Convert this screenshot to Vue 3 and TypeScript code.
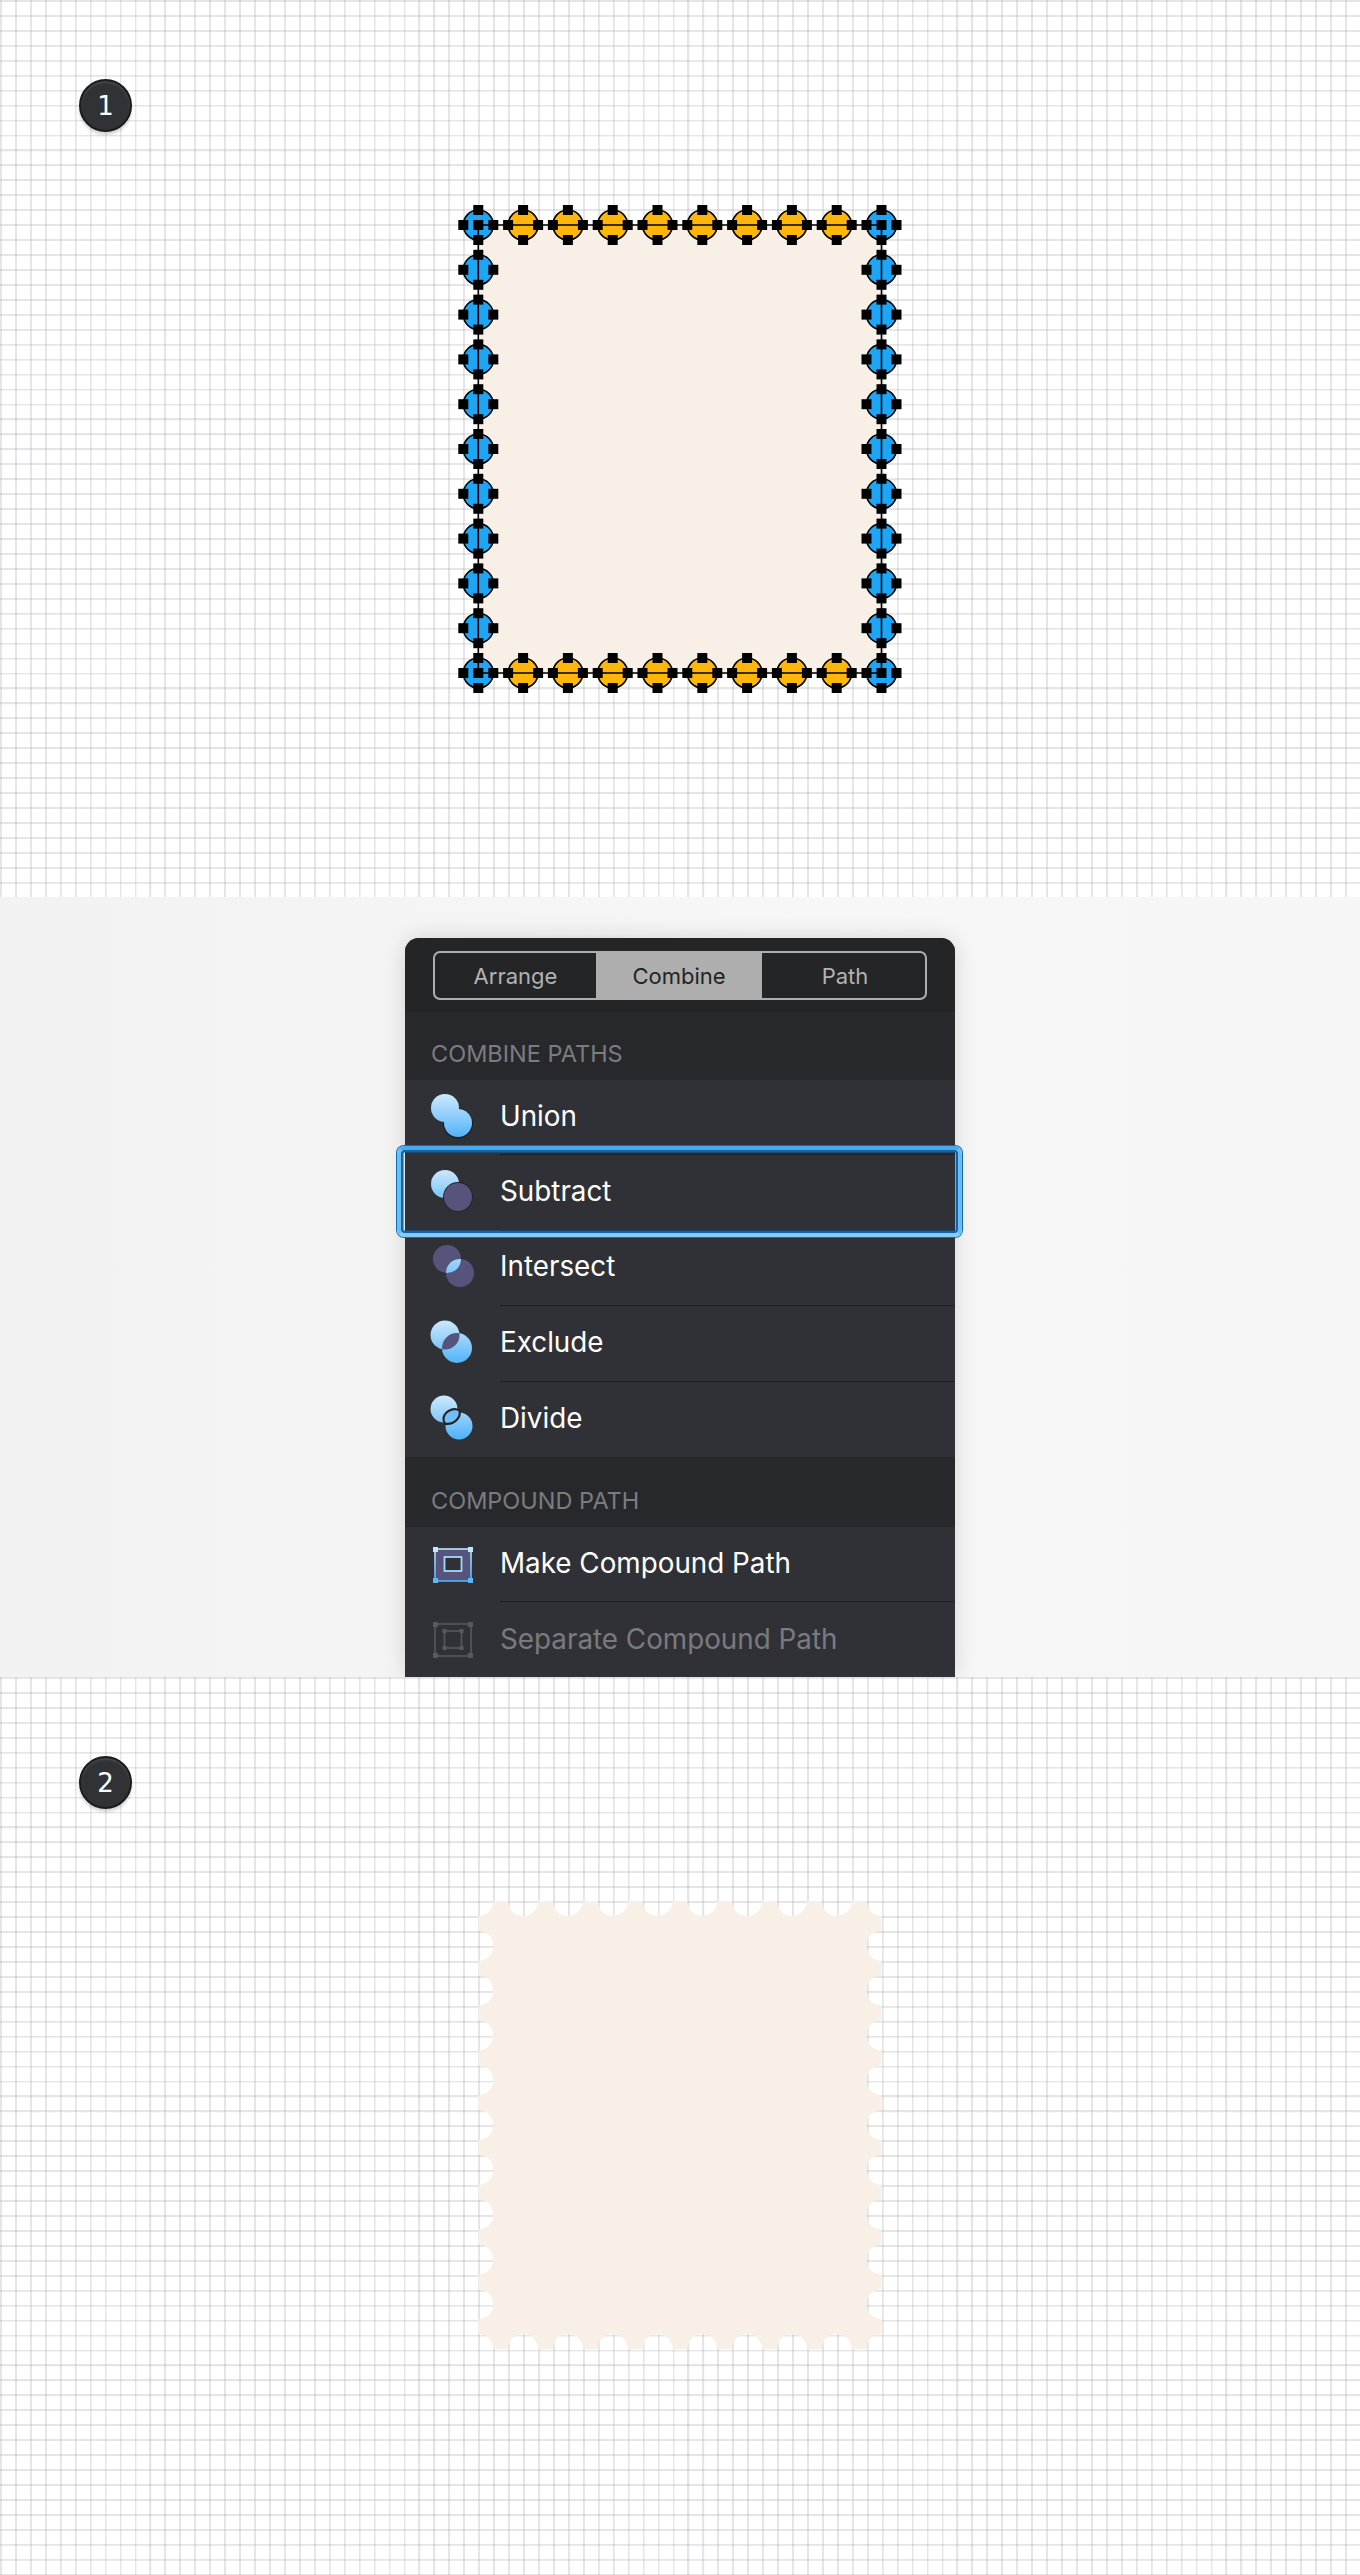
<script setup lang="ts">
const STEP = 44.8
const R = 15
const X0 = 478.3
const Y0 = 225
const Y1 = 1901
const COLS = 10
const ROWS = 11
const X_END = X0 + STEP * (COLS - 1)
const H = STEP * (ROWS - 1)

interface Node { x: number; y: number; blue: boolean; corner: boolean }

const nodes: Node[] = []
for (let r = 0; r < ROWS; r++) {
  for (let c = 0; c < COLS; c++) {
    const edgeR = r === 0 || r === ROWS - 1
    const edgeC = c === 0 || c === COLS - 1
    if (edgeR || edgeC) {
      nodes.push({ x: X0 + c * STEP, y: Y0 + r * STEP, blue: edgeC, corner: edgeR && edgeC })
    }
  }
}

const handles: { x: number; y: number }[] = []
for (const n of nodes) {
  handles.push({ x: n.x, y: n.y - R }, { x: n.x, y: n.y + R }, { x: n.x - R, y: n.y }, { x: n.x + R, y: n.y })
  if (n.corner) handles.push({ x: n.x, y: n.y })
}

function stampPath(): string {
  const notch = (x: number, y: number) => `L${x} ${y}A${R} ${R} 0 0 0 `
  let d = `M${X0 + R} ${Y1}`
  for (let c = 1; c < COLS - 1; c++) {
    const x = X0 + c * STEP
    d += notch(x - R, Y1) + `${x + R} ${Y1}`
  }
  d += notch(X_END - R, Y1) + `${X_END} ${Y1 + R}`
  for (let r = 1; r < ROWS - 1; r++) {
    const y = Y1 + r * STEP
    d += notch(X_END, y - R) + `${X_END} ${y + R}`
  }
  d += notch(X_END, Y1 + H - R) + `${X_END - R} ${Y1 + H}`
  for (let c = COLS - 2; c > 0; c--) {
    const x = X0 + c * STEP
    d += notch(x + R, Y1 + H) + `${x - R} ${Y1 + H}`
  }
  d += notch(X0 + R, Y1 + H) + `${X0} ${Y1 + H - R}`
  for (let r = ROWS - 2; r > 0; r--) {
    const y = Y1 + r * STEP
    d += notch(X0, y + R) + `${X0} ${y - R}`
  }
  d += notch(X0, Y1 + R) + `${X0 + R} ${Y1}Z`
  return d
}
const stamp = stampPath()

const tabs = [
  { label: 'Arrange', active: false },
  { label: 'Combine', active: true },
  { label: 'Path', active: false },
]
const combineRows = [
  { label: 'Union', icon: 'union' },
  { label: 'Subtract', icon: 'subtract', selected: true },
  { label: 'Intersect', icon: 'intersect' },
  { label: 'Exclude', icon: 'exclude' },
  { label: 'Divide', icon: 'divide' },
]
</script>

<template>
  <div class="page">
    <section class="sheet">
      <div class="badge">1</div>
      <svg class="art" viewBox="450 200 460 500" width="460" height="500">
        <rect :x="X0" :y="Y0" :width="X_END - X0" :height="H" fill="#f8f0e6" />
        <circle
          v-for="(n, i) in nodes"
          :key="'c' + i"
          :cx="n.x"
          :cy="n.y"
          :r="R"
          :fill="n.blue ? '#1fa5f6' : '#ffb60a'"
          stroke="#000"
          stroke-width="1.6"
        />
        <path
          :d="`M${X0} ${Y0}H${X_END}V${Y0 + H}H${X0}Z`"
          fill="none"
          stroke="#000"
          stroke-width="1.6"
        />
        <rect
          v-for="(h, i) in handles"
          :key="'h' + i"
          :x="h.x - 5"
          :y="h.y - 5"
          width="10"
          height="10"
          fill="#000"
        />
      </svg>
    </section>

    <section class="middle">
      <div class="panel">
        <div class="toolbar">
          <div class="segments">
            <div v-for="t in tabs" :key="t.label" class="segment" :class="{ active: t.active }">{{ t.label }}</div>
          </div>
        </div>
        <div class="group-title first">COMBINE PATHS</div>
        <div v-for="row in combineRows" :key="row.label" class="row" :class="{ selected: row.selected }">
          <div class="icon">
            <svg viewBox="0 0 50 50" width="50" height="50">
              <defs>
                <linearGradient :id="'g-' + row.icon" gradientUnits="userSpaceOnUse" x1="0" y1="2" x2="0" y2="45">
                  <stop offset="0" stop-color="#cbe8fd" />
                  <stop offset="1" stop-color="#4fb2f8" />
                </linearGradient>
                <clipPath :id="'clip-' + row.icon">
                  <circle v-if="row.icon === 'intersect'" cx="22" cy="16" r="14" />
                  <circle v-else cx="20" cy="16" r="14.5" />
                </clipPath>
              </defs>
              <template v-if="row.icon === 'union'">
                <circle cx="33" cy="30.5" r="15" fill="#1b1c1f" />
                <circle cx="20" cy="15" r="14" fill="url(#g-union)" />
                <circle cx="33" cy="30" r="14" fill="url(#g-union)" />
              </template>
              <template v-else-if="row.icon === 'subtract'">
                <circle cx="20" cy="16" r="14" fill="url(#g-subtract)" />
                <circle cx="33" cy="29" r="15" fill="#24252a" />
                <circle cx="33" cy="29" r="14" fill="#56547c" />
              </template>
              <template v-else-if="row.icon === 'intersect'">
                <circle cx="22" cy="16" r="14" fill="#56547c" />
                <circle cx="35" cy="30" r="14" fill="#56547c" />
                <circle cx="35" cy="30" r="14" fill="url(#g-intersect)" :clip-path="'url(#clip-intersect)'" />
              </template>
              <template v-else-if="row.icon === 'exclude'">
                <circle cx="20" cy="16" r="14.5" fill="url(#g-exclude)" />
                <circle cx="32" cy="29" r="15" fill="url(#g-exclude)" />
                <circle cx="32" cy="29" r="15" fill="#56547c" :clip-path="'url(#clip-exclude)'" />
              </template>
              <template v-else>
                <circle cx="19" cy="15" r="13.5" fill="url(#g-divide)" />
                <circle cx="34" cy="32" r="13.5" fill="url(#g-divide)" />
                <path d="M18.5 24C20 17 29 13 34.6 16.7C36 23 30 31 20.2 29.8C18.8 28 18.2 26 18.5 24Z" fill="#6fbff9" stroke="#24252a" stroke-width="2.2" />
              </template>
            </svg>
          </div>
          <div class="label">{{ row.label }}</div>
          <div v-if="row.selected" class="focus-frame"></div>
        </div>
        <div class="group-title">COMPOUND PATH</div>
        <div class="row">
          <div class="icon">
            <svg viewBox="0 0 50 50" width="50" height="50">
              <defs>
                <linearGradient id="g-make" x1="0" y1="0" x2="0" y2="1">
                  <stop offset="0" stop-color="#bfe3fc" />
                  <stop offset="1" stop-color="#52b4f9" />
                </linearGradient>
              </defs>
              <rect x="10" y="9" width="36" height="32" fill="#56547c" stroke="url(#g-make)" stroke-width="1.6" />
              <rect x="19.5" y="17" width="17" height="14" fill="#303136" stroke="#a3d8fb" stroke-width="1.8" />
              <rect x="8" y="7" width="5" height="5" fill="#c3e5fd" />
              <rect x="43" y="7" width="5" height="5" fill="#c3e5fd" />
              <rect x="8" y="38" width="5" height="5" fill="#5ab8f9" />
              <rect x="43" y="38" width="5" height="5" fill="#5ab8f9" />
            </svg>
          </div>
          <div class="label">Make Compound Path</div>
        </div>
        <div class="row disabled">
          <div class="icon">
            <svg viewBox="0 0 50 50" width="50" height="50" fill="#58595d" stroke="none">
              <rect x="10" y="9" width="36" height="32" fill="none" stroke="#58595d" stroke-width="1.6" />
              <rect x="19.5" y="16" width="17" height="17" fill="none" stroke="#58595d" stroke-width="1.6" />
              <rect x="8" y="7" width="5" height="5" />
              <rect x="43" y="7" width="5" height="5" />
              <rect x="8" y="38" width="5" height="5" />
              <rect x="43" y="38" width="5" height="5" />
              <rect x="17.5" y="14" width="4" height="4" />
              <rect x="34.5" y="14" width="4" height="4" />
              <rect x="17.5" y="31" width="4" height="4" />
              <rect x="34.5" y="31" width="4" height="4" />
            </svg>
          </div>
          <div class="label">Separate Compound Path</div>
        </div>
      </div>
    </section>

    <section class="sheet last">
      <div class="badge">2</div>
      <svg class="art" viewBox="450 1877 460 500" width="460" height="500">
        <path :d="stamp" fill="#f8f0e6" />
      </svg>
    </section>
  </div>
</template>

<style scoped>
.page {
  width: 1360px;
  height: 2575px;
  overflow: hidden;
  font-family: Inter, "Liberation Sans", sans-serif;
}
.sheet {
  box-sizing: border-box;
  height: 897px;
  padding: 79px 79px 0;
  background-color: #fff;
  background-image:
    repeating-linear-gradient(90deg, rgba(170, 170, 178, 0.3) 0, rgba(170, 170, 178, 0.3) 1.6px, transparent 2.2px, transparent 14.945px),
    repeating-linear-gradient(180deg, rgba(170, 170, 178, 0.3) 0, rgba(170, 170, 178, 0.3) 1.6px, transparent 2.2px, transparent 14.945px);
}
.sheet.last {
  height: 898px;
}
.badge {
  box-sizing: border-box;
  width: 53px;
  height: 53px;
  border-radius: 50%;
  background: #313236;
  border: 2px solid #1b1c1e;
  box-shadow: 0 3px 3px rgba(0, 0, 0, 0.16), inset 0 2px 2px rgba(255, 255, 255, 0.1);
  color: #fff;
  font-family: "DejaVu Sans", sans-serif;
  font-size: 26px;
  line-height: 51px;
  text-align: center;
}
.art {
  display: block;
  margin: 68px auto 0;
}
.middle {
  height: 780px;
  display: flex;
  justify-content: center;
  padding-top: 41px;
  box-sizing: border-box;
  overflow: hidden;
  background: linear-gradient(90deg, #f2f2f2, #f7f7f7 60%, #f6f6f6);
}
.panel {
  width: 550px;
  height: 739px;
  border-radius: 14px 14px 0 0;
  background: #26272a;
  box-shadow: 0 0 24px rgba(0, 0, 0, 0.14);
}
.toolbar {
  box-sizing: border-box;
  height: 76px;
  padding: 13px 28px 0;
  background: #242527;
  border-bottom: 1px solid #2b2c2e;
  border-radius: 14px 14px 0 0;
}
.segments {
  display: flex;
  width: 494px;
  height: 49px;
  box-sizing: border-box;
  border: 2px solid #aeaeae;
  border-radius: 7px;
  overflow: hidden;
}
.segment {
  flex: 1;
  display: flex;
  align-items: center;
  justify-content: center;
  font-size: 22px;
  color: #b2b2b4;
}
.segment:first-child {
  flex: 0 0 161px;
}
.segment:last-child {
  padding-left: 3px;
}
.segment.active {
  flex: 0 0 166px;
  background: #aeaeae;
  color: #232427;
}
.group-title {
  box-sizing: border-box;
  height: 70px;
  padding: 28px 0 0 26px;
  font-size: 23.5px;
  line-height: 32px;
  color: #7b7c80;
  background: #27282b;
}
.group-title.first {
  height: 66px;
  padding-top: 24px;
}
.row {
  position: relative;
  display: flex;
  height: 75.4px;
  background: #303136;
  padding-left: 20px;
}
.row.selected {
  z-index: 1;
}
.icon {
  width: 75px;
  flex: none;
  display: flex;
  align-items: center;
}
.label {
  flex: 1;
  display: flex;
  align-items: center;
  box-sizing: border-box;
  padding-bottom: 3px;
  font-size: 27.8px;
  color: #fff;
  border-bottom: 1px solid #1e1f22;
}
.row:nth-last-of-type(1) .label,
.row:has(+ .group-title) .label {
  border-bottom: none;
}
.row.disabled .label {
  color: #7a7b7f;
}
.focus-frame {
  position: absolute;
  top: -9px;
  right: -7px;
  bottom: -6px;
  left: -8px;
  border-radius: 7px;
  border: 4px solid #6dbdf3;
  border-top-color: #4aa8ec;
  border-bottom-color: #86ccfb;
  box-shadow: 0 0 0 1px #0e6cb4, inset 0 0 0 2.5px #0f65a8;
  pointer-events: none;
}
</style>
